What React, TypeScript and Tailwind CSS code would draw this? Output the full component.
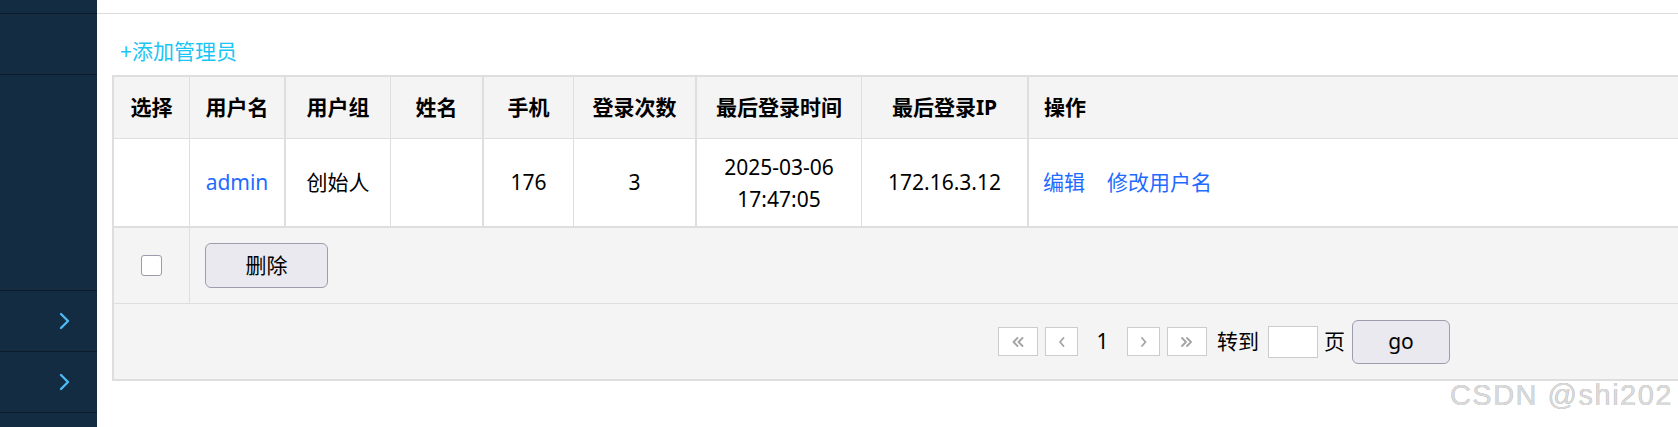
import React from "react";

const font = { fontFamily: '"Noto Sans", "Noto Sans CJK SC", sans-serif' };

function SideChevron() {
  return (
    <svg width="11" height="18" viewBox="0 0 11 18" fill="none">
      <path d="M2 2 L9 9 L2 16" stroke="#4db9f4" strokeWidth="2.4" strokeLinecap="round" strokeLinejoin="round" />
    </svg>
  );
}

function PageIcon({ kind }: { kind: "first" | "prev" | "next" | "last" }) {
  const paths: Record<string, string[]> = {
    first: ["M5.5 1 L1.5 5 L5.5 9", "M10.5 1 L6.5 5 L10.5 9"],
    prev: ["M4.5 1 L1 5 L4.5 9"],
    next: ["M1 1 L4.5 5 L1 9"],
    last: ["M1 1 L5 5 L1 9", "M6 1 L10 5 L6 9"],
  };
  const w = kind === "first" || kind === "last" ? 12 : 6;
  return (
    <svg width={w} height="10" viewBox={`0 0 ${w} 10`} fill="none">
      {paths[kind].map((d) => (
        <path key={d} d={d} stroke="#a3a3a3" strokeWidth="1.8" strokeLinecap="round" strokeLinejoin="round" />
      ))}
    </svg>
  );
}

const cols = [
  { w: "w-[76px]", b: "border-r" },
  { w: "w-[96px]", b: "border-r-2" },
  { w: "w-[105px]", b: "border-r" },
  { w: "w-[93px]", b: "border-r-2" },
  { w: "w-[90px]", b: "border-r" },
  { w: "w-[123px]", b: "border-r-2" },
  { w: "w-[165px]", b: "border-r" },
  { w: "w-[167px]", b: "border-r-2" },
];

const headers = ["选择", "用户名", "用户组", "姓名", "手机", "登录次数", "最后登录时间", "最后登录IP"];

export default function App() {
  const row: React.ReactNode[] = [
    "",
    <span className="text-[#1f6bff]">admin</span>,
    "创始人",
    "",
    "176",
    "3",
    <span className="leading-[32px]">
      2025-03-06
      <br />
      17:47:05
    </span>,
    "172.16.3.12",
  ];

  return (
    <div className="flex h-[427px] w-full overflow-hidden bg-white text-black text-[21px]" style={font}>
      {/* sidebar */}
      <div className="flex w-[97px] shrink-0 flex-col bg-[#132c42]">
        <div className="h-[13px]" />
        <div className="h-[61px] border-t border-[#0c1b29]" />
        <div className="h-[216px] border-t border-[#0c1b29]" />
        <div className="flex h-[61px] items-center justify-end border-t border-[#0c1b29] pr-[27px]">
          <SideChevron />
        </div>
        <div className="flex h-[61px] items-center justify-end border-t border-[#0c1b29] pr-[27px]">
          <SideChevron />
        </div>
        <div className="flex-1 border-t border-[#0c1b29]" />
      </div>

      {/* main */}
      <div className="relative min-w-0 flex-1 overflow-hidden">
        <div className="h-[14px] border-b border-[#dcdcdc]" />
        <div className="mt-[23px] mb-[10px] pl-[23px] leading-[28px] text-[#1bc5f3]">+添加管理员</div>

        <div className="ml-[15px] w-[1700px] border-2 border-r-0 border-[#dedede]">
          {/* header */}
          <div className="flex h-[62px] border-b border-[#dedede] bg-[#f4f4f4] font-bold">
            {headers.map((h, i) => (
              <div key={h} className={`${cols[i].w} ${cols[i].b} flex shrink-0 items-center justify-center border-[#dedede]`}>
                {h}
              </div>
            ))}
            <div className="flex flex-1 items-center pl-[15px]">操作</div>
          </div>

          {/* data row */}
          <div className="flex h-[89px] border-b-2 border-[#dedede] bg-white">
            {row.map((c, i) => (
              <div key={i} className={`${cols[i].w} ${cols[i].b} flex shrink-0 items-center justify-center border-[#dedede] text-center`}>
                {c}
              </div>
            ))}
            <div className="flex flex-1 items-center gap-[22px] pl-[14px] text-[#1f6bff]">
              <span>编辑</span>
              <span>修改用户名</span>
            </div>
          </div>

          {/* footer actions */}
          <div className="flex h-[76px] border-b border-[#dedede] bg-[#f4f4f4]">
            <div className="flex w-[76px] shrink-0 items-center justify-center border-r border-[#dedede]">
              <input type="checkbox" className="h-[21px] w-[21px] appearance-none rounded-[3px] border border-[#9b9bab] bg-white" />
            </div>
            <div className="flex flex-1 items-center pl-[15px]">
              <button className="h-[45px] w-[123px] rounded-[6px] border border-[#9d9db0] bg-[#e9e9ef] text-[21px]">删除</button>
            </div>
          </div>

          {/* pagination */}
          <div className="flex h-[75px] items-center bg-[#f4f4f4] pl-[884px]">
            <div className="flex h-[29px] w-[40px] items-center justify-center border border-[#cccccc] bg-white">
              <PageIcon kind="first" />
            </div>
            <div className="ml-[7px] flex h-[29px] w-[33px] items-center justify-center border border-[#cccccc] bg-white">
              <PageIcon kind="prev" />
            </div>
            <div className="w-[49px] text-center leading-[29px]">1</div>
            <div className="flex h-[29px] w-[33px] items-center justify-center border border-[#cccccc] bg-white">
              <PageIcon kind="next" />
            </div>
            <div className="ml-[7px] flex h-[29px] w-[40px] items-center justify-center border border-[#cccccc] bg-white">
              <PageIcon kind="last" />
            </div>
            <span className="ml-[10px]">转到</span>
            <input className="ml-[9px] h-[32px] w-[50px] border border-[#cccccc] bg-white outline-none" />
            <span className="ml-[6px]">页</span>
            <button className="ml-[7px] h-[44px] w-[98px] rounded-[6px] border border-[#9d9db0] bg-[#e9e9ef] text-[21px]">go</button>
          </div>
        </div>

        <div
          className="absolute right-[5px] top-[381px] text-[29px] leading-none tracking-[1.5px] text-[#dadada]"
          style={{ fontFamily: '"Liberation Sans", Arial, sans-serif', textShadow: "0 0 0.6px #8f8f8f" }}
        >
          CSDN @shi202
        </div>
      </div>
    </div>
  );
}
